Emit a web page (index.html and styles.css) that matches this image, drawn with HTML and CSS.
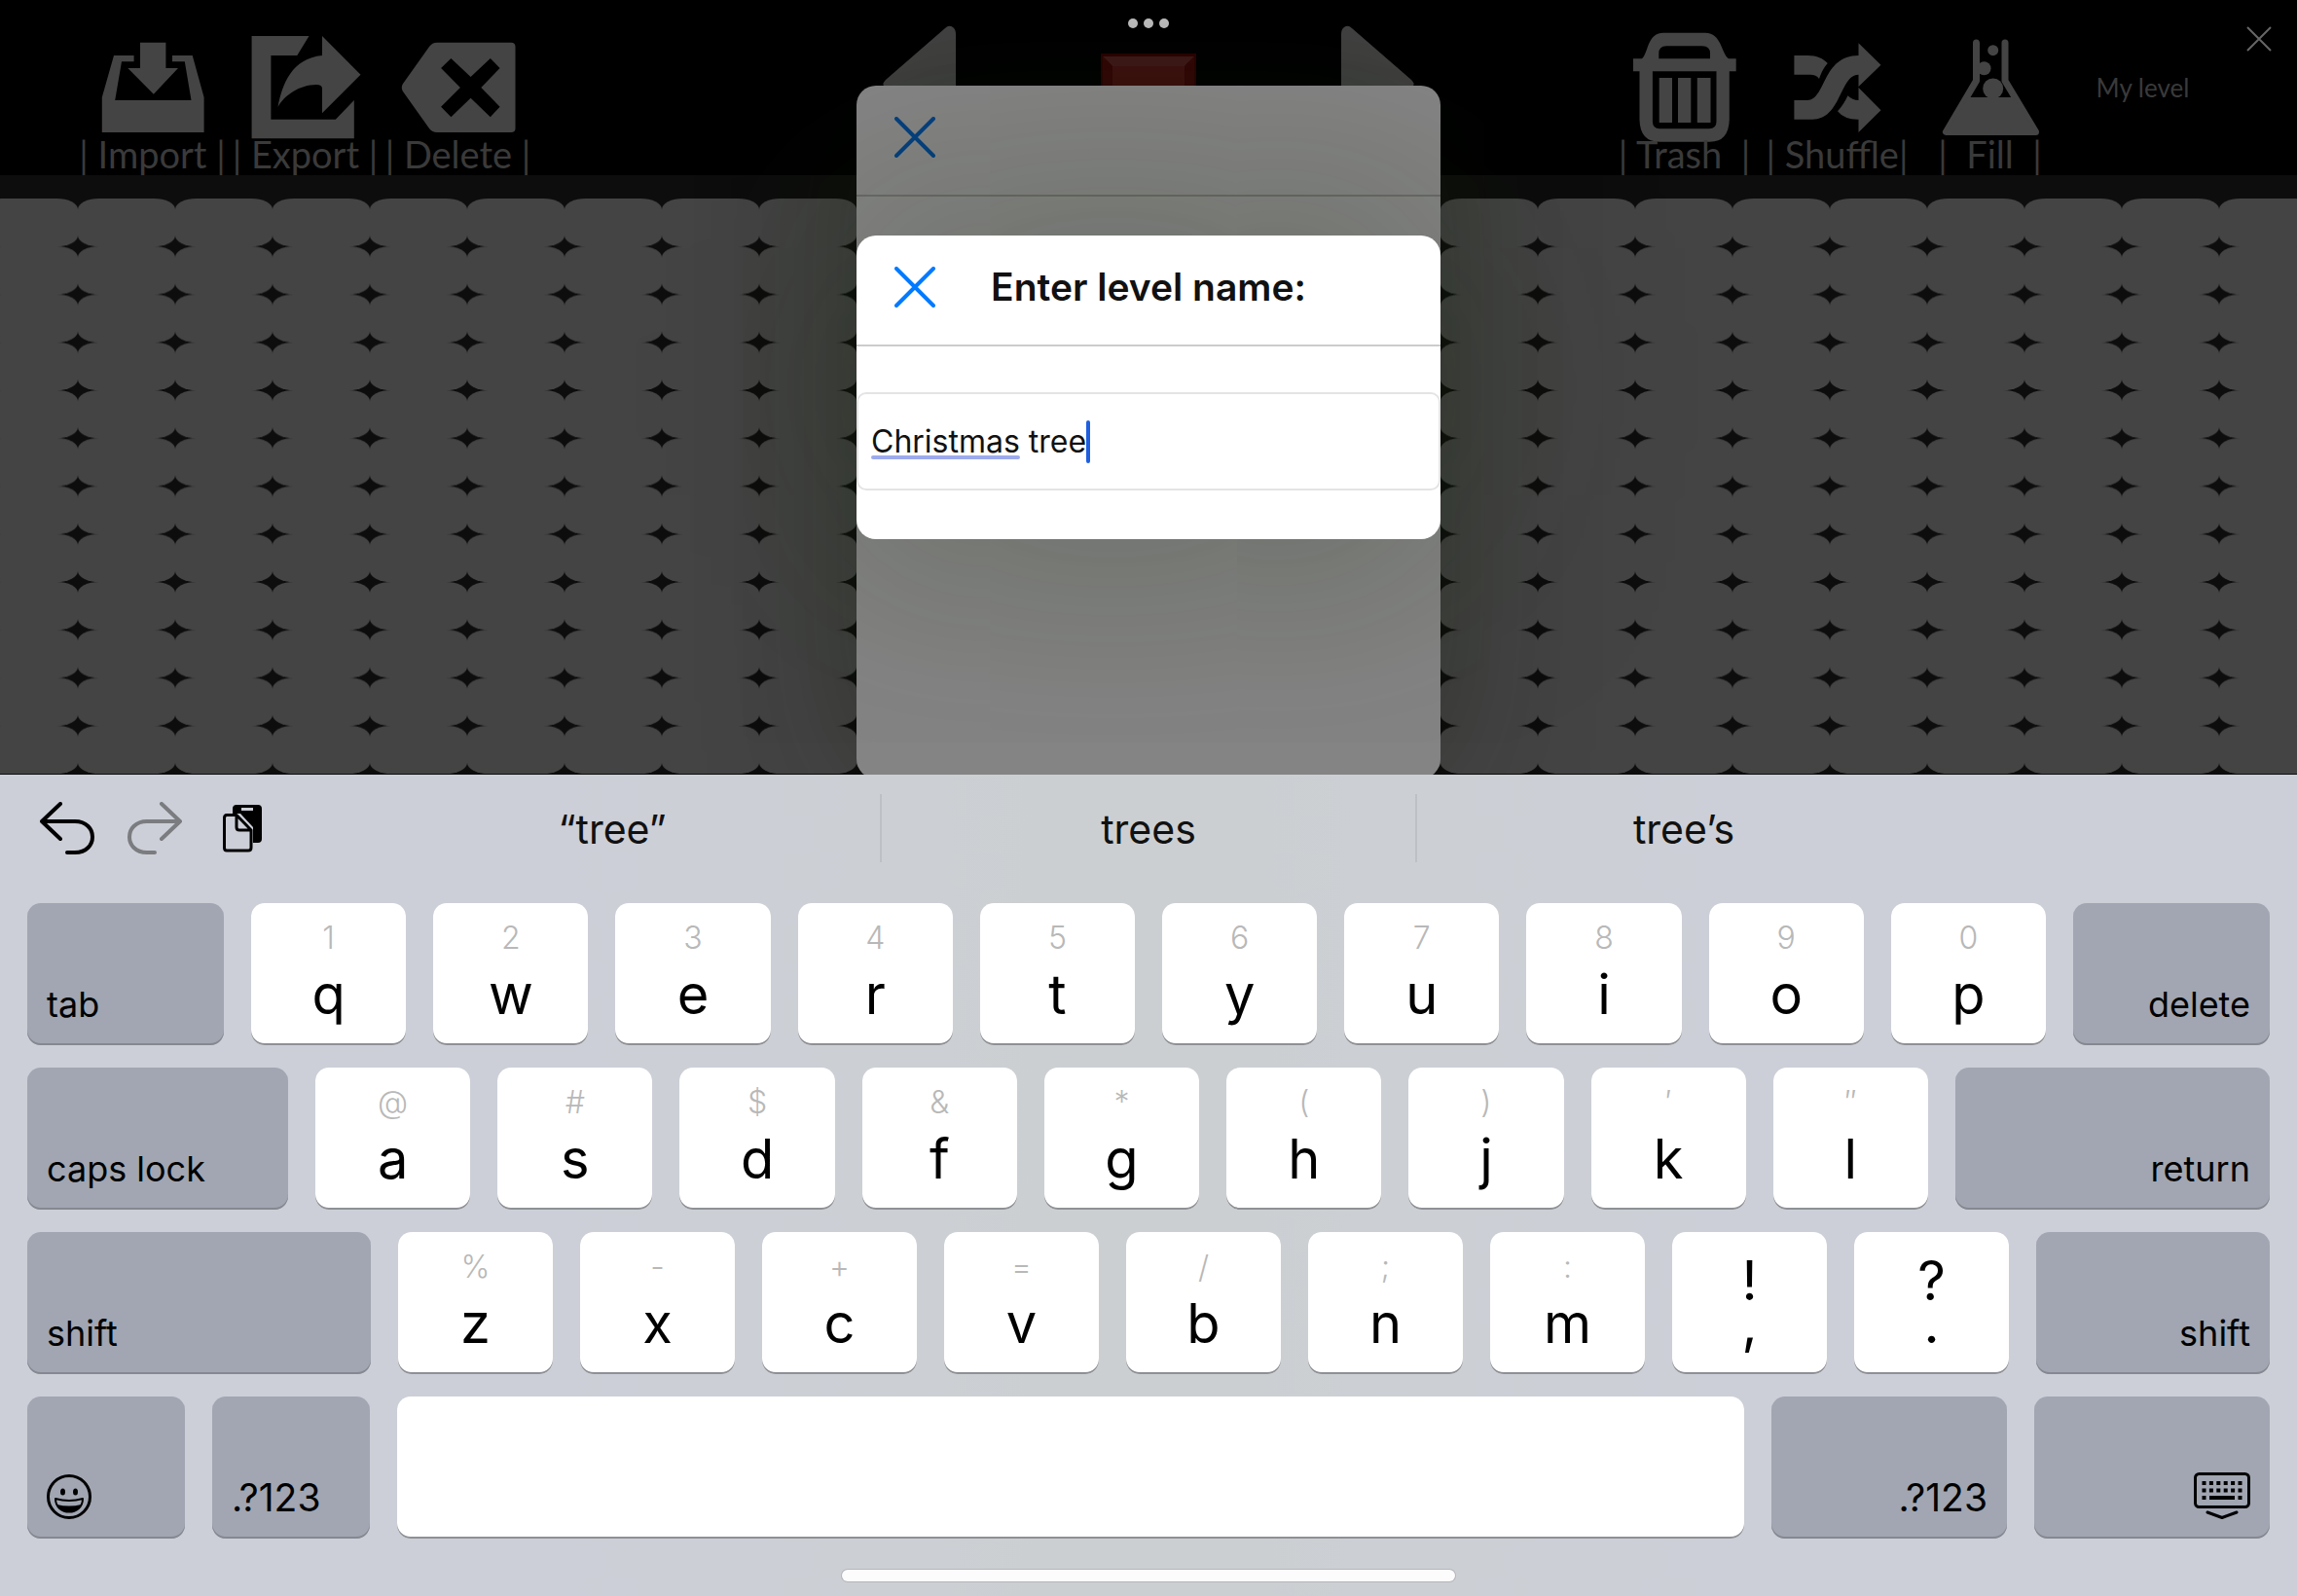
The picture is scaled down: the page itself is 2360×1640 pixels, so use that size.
FILE: index.html
```html
<!DOCTYPE html>
<html lang="en">
<head>
<meta charset="utf-8">
<title>Level editor</title>
<link rel="stylesheet" href="styles.css">
</head>
<body>
<main class="editor">
  <header class="toolbar">
    <div class="tools">
      <button class="tool" type="button">
        <svg class="tool-icon" viewBox="78 0 157 142" aria-hidden="true"><path d="M144 43.700H170.400V70H183L157.800 96.700L131.300 70H144Z"/><path d="M117 57H137.600V63.300H125L118.200 103H196.500L189.800 63.300H177V57H197.700L209.600 100V136H104.800V100Z"/></svg>
        <span class="tool-label">| Import |</span>
      </button>
      <button class="tool" type="button">
        <svg class="tool-icon" viewBox="235 0 157 142" aria-hidden="true"><path d="M258.600 37H317.500L305.300 57H278.400V122.700H344.800L363.800 103V142.300H258.600Z"/><path d="M331 37L370.500 76.700L331 116.300V91Q331 87 325 87C308 87 292 98 285.500 110C290 86 300 60 331 57Z"/></svg>
        <span class="tool-label">| Export |</span>
      </button>
      <button class="tool" type="button">
        <svg class="tool-icon" viewBox="392 0 157 142" aria-hidden="true"><path fill-rule="evenodd" d="M449 43.700H525Q529.500 43.700 529.500 48V132Q529.500 136 525 136H449Q444 136 441 132L414 94Q411.500 90 414 86L441 48Q444 43.700 449 43.700ZM453.100 70L472.900 90L453.100 109.700L463.400 120.300L483.600 100.700L503.800 120.300L513.600 109.700L494.300 90L513.600 70L503.800 60L483.600 79L463.400 60Z"/></svg>
        <span class="tool-label">| Delete |</span>
      </button>
    </div>

    <div class="picker">
      <button class="picker-step" type="button" aria-label="Previous block">
        <svg viewBox="0 0 108 142" aria-hidden="true"><path d="M97 29Q101 25 105 28Q108 30 108 35V142L34 88Q32 86 36 82Z"/></svg>
      </button>
      <svg class="picker-block" viewBox="0 0 98 98" aria-hidden="true"><path fill="#2c0302" d="M0 0H98V98H0Z"/><path fill="#42191a" d="M2 3H96L86 13H12Z"/><path fill="#360606" d="M2 3L12 13V86L2 96ZM96 3L86 13V86L96 96Z"/><path fill="#421010" d="M12 13H86V86H12Z"/></svg>
      <button class="picker-step" type="button" aria-label="Next block">
        <svg viewBox="0 0 108 142" aria-hidden="true"><path d="M11 29Q7 25 3 28Q0 30 0 35V142L74 88Q76 86 72 82Z"/></svg>
      </button>
    </div>

    <div class="tools">
      <button class="tool" type="button">
        <svg class="tool-icon" viewBox="1652 0 157 142" aria-hidden="true"><path fill-rule="evenodd" d="M1678 60.300H1687C1694 54 1692 34 1709 33.700H1752C1769 34 1768 54 1776 60.300H1783.700V73.300H1776.800V123Q1776 145.700 1757 145.700H1705Q1685 145.700 1684.500 123V73.300H1678ZM1704.300 60.300H1757V55Q1757 47.300 1749 47.300H1712Q1704.300 47.300 1704.300 55ZM1697.900 73.300V125Q1698 132.300 1705 132.300H1756Q1763.500 132.300 1763.500 125V73.300Z"/><path d="M1704.700 80H1718V126H1704.700ZM1724 80H1737.300V126H1724ZM1743.800 80H1757.500V126H1743.800Z"/></svg>
        <span class="tool-label">| Trash  |</span>
      </button>
      <button class="tool" type="button">
        <svg class="tool-icon" viewBox="1809 0 157 142" aria-hidden="true"><path d="M1843.400 57H1857C1867 57 1873 60 1877.800 65C1873 70 1871 76 1869 81C1867 78 1864 76.700 1860 76.700H1843.400Z"/><path d="M1843.400 103H1857C1876 103 1872 57 1909.500 57V44.300L1932.500 66.700L1909.500 89V76.700C1890 77 1892 122.700 1862 122.700H1843.400Z"/><path d="M1898.500 98.300Q1903 103 1909.500 103V90L1932.500 113.300L1909.500 136V122.700Q1895 123 1888 114.300Q1894 108 1898.500 98.300Z"/></svg>
        <span class="tool-label">| Shuffle|</span>
      </button>
      <button class="tool" type="button">
        <svg class="tool-icon" viewBox="1966 0 157 142" aria-hidden="true"><path fill="none" stroke="#444" stroke-width="7" stroke-linecap="round" stroke-linejoin="round" d="M2030.500 44V83L1999.500 135.500H2091.500L2060 83V44"/><path d="M2022 100H2069L2091 136H2000Z"/><circle cx="2047.700" cy="51.700" r="5.500"/><circle cx="2038.500" cy="70.300" r="7"/><circle cx="2047.700" cy="91" r="10.500"/></svg>
        <span class="tool-label">|  Fill  |</span>
      </button>
      <span class="level-name">My level</span>
    </div>

    <span class="window-dots" aria-hidden="true"><i></i><i></i><i></i></span>
    <button class="close-editor" type="button" aria-label="Close editor">
      <svg viewBox="0 0 26 26" aria-hidden="true"><path d="M1 1L25 25M25 1L1 25"/></svg>
    </button>
  </header>

  <section class="board" aria-label="Level board">
    <svg class="board-grid" aria-hidden="true">
      <defs>
        <pattern id="cell" x="80" y="0" width="100" height="49.250" patternUnits="userSpaceOnUse">
          <rect width="100" height="49.250" rx="22" ry="11"/>
        </pattern>
      </defs>
      <rect width="100%" height="591" fill="url(#cell)"/>
    </svg>
  </section>

  <section class="sheet sheet-back" aria-hidden="true">
    <div class="sheet-head">
      <button class="sheet-close" type="button" tabindex="-1">
        <svg viewBox="0 0 42 42"><path d="M2 2L40 40M40 2L2 40"/></svg>
      </button>
    </div>
  </section>

  <section class="sheet sheet-front" role="dialog" aria-labelledby="sheet-title">
    <div class="sheet-head">
      <button class="sheet-close" type="button" aria-label="Close">
        <svg viewBox="0 0 42 42" aria-hidden="true"><path d="M2 2L40 40M40 2L2 40"/></svg>
      </button>
      <label class="sheet-title" id="sheet-title" for="level-name">Enter level name:</label>
    </div>
    <div class="field">
      <input class="field-input" id="level-name" type="text" value="Christmas tree" spellcheck="false">
      <span class="field-mark" aria-hidden="true"></span>
      <span class="field-caret" aria-hidden="true"></span>
    </div>
  </section>
</main>

<section class="keyboard" aria-label="Keyboard">
  <div class="suggestions">
    <div class="edit-actions">
      <button type="button" aria-label="Undo"><svg width="56" height="54" viewBox="0 0 56 54" aria-hidden="true"><path d="M21 2L2 20L21 38M2 20H36C60 20 60 52 36 52H28"/></svg></button>
      <button class="is-off" type="button" aria-label="Redo"><svg width="56" height="54" viewBox="0 0 56 54" aria-hidden="true"><path d="M35 2L54 20L35 38M54 20H20C-4 20 -4 52 20 52H28"/></svg></button>
      <button class="paste" type="button" aria-label="Paste"><svg width="40" height="50" viewBox="0 0 40 50" aria-hidden="true"><path class="solid" fill-rule="evenodd" d="M14 1H36Q40 1 40 5V36Q40 40 36 40H31V24L18 10H10V5Q10 1 14 1ZM19 4V7H31V4Z"/><path class="thin" d="M4 11.500H14L29 27V45Q29 48 26 48H4Q1.500 48 1.500 45V14.500Q1.500 11.500 4 11.500ZM14 11.500V24Q14 27 17 27H29"/></svg></button>
    </div>
    <button class="suggestion" type="button">“tree”</button>
    <button class="suggestion" type="button">trees</button>
    <button class="suggestion" type="button">tree’s</button>
  </div>

  <div class="rows">
    <div class="row">
      <button class="key fn tab" type="button">tab</button>
      <button class="key" type="button"><small>1</small><span>q</span></button>
      <button class="key" type="button"><small>2</small><span>w</span></button>
      <button class="key" type="button"><small>3</small><span>e</span></button>
      <button class="key" type="button"><small>4</small><span>r</span></button>
      <button class="key" type="button"><small>5</small><span>t</span></button>
      <button class="key" type="button"><small>6</small><span>y</span></button>
      <button class="key" type="button"><small>7</small><span>u</span></button>
      <button class="key" type="button"><small>8</small><span>i</span></button>
      <button class="key" type="button"><small>9</small><span>o</span></button>
      <button class="key" type="button"><small>0</small><span>p</span></button>
      <button class="key fn end tab" type="button">delete</button>
    </div>
    <div class="row">
      <button class="key fn caps" type="button">caps lock</button>
      <button class="key" type="button"><small>@</small><span>a</span></button>
      <button class="key" type="button"><small>#</small><span>s</span></button>
      <button class="key" type="button"><small>$</small><span>d</span></button>
      <button class="key" type="button"><small>&amp;</small><span>f</span></button>
      <button class="key" type="button"><small>*</small><span>g</span></button>
      <button class="key" type="button"><small>(</small><span>h</span></button>
      <button class="key" type="button"><small>)</small><span>j</span></button>
      <button class="key" type="button"><small>′</small><span>k</span></button>
      <button class="key" type="button"><small>″</small><span>l</span></button>
      <button class="key fn end return" type="button">return</button>
    </div>
    <div class="row">
      <button class="key fn shift-left" type="button">shift</button>
      <button class="key" type="button"><small>%</small><span>z</span></button>
      <button class="key" type="button"><small>-</small><span>x</span></button>
      <button class="key" type="button"><small>+</small><span>c</span></button>
      <button class="key" type="button"><small>=</small><span>v</span></button>
      <button class="key" type="button"><small>/</small><span>b</span></button>
      <button class="key" type="button"><small>;</small><span>n</span></button>
      <button class="key" type="button"><small>:</small><span>m</span></button>
      <button class="key pair" type="button"><span>!</span><span>,</span></button>
      <button class="key pair" type="button"><span>?</span><span>.</span></button>
      <button class="key fn end shift-right" type="button">shift</button>
    </div>
    <div class="row">
      <button class="key fn narrow" type="button" aria-label="Emoji">
        <svg width="46" height="46" viewBox="0 0 46 46" aria-hidden="true"><circle cx="23" cy="23" r="21.500" fill="none" stroke="#000" stroke-width="3"/><ellipse cx="16.500" cy="18" rx="2.500" ry="3.500"/><ellipse cx="29.500" cy="18" rx="2.500" ry="3.500"/><path fill="none" stroke="#000" stroke-width="2" stroke-linejoin="round" d="M9 25Q23 29 37 25C37 43 9 43 9 25Z"/><path d="M10.500 31Q23 34 35.500 31C31 41 15 41 10.500 31Z"/></svg>
      </button>
      <button class="key fn num narrow" type="button">.?123</button>
      <button class="key space" type="button" aria-label="Space"></button>
      <button class="key fn num end wide" type="button">.?123</button>
      <button class="key fn end wide" type="button" aria-label="Hide keyboard">
        <svg width="58" height="48" viewBox="0 0 58 48" aria-hidden="true"><rect x="1.500" y="1.500" width="55" height="34" rx="4" fill="none" stroke="#000" stroke-width="3"/><path fill="none" stroke="#000" stroke-width="4" stroke-dasharray="4 3.400" d="M8.500 11H50M8.500 18.500H50"/><path d="M8.500 24H12.500V28H8.500ZM45.500 24H49.500V28H45.500ZM16 24H42V28H16Z"/><path fill="none" stroke="#000" stroke-width="3" stroke-linecap="round" stroke-linejoin="round" d="M14 41L29 46.500L44 41"/></svg>
      </button>
    </div>
  </div>
  <div class="home-bar"></div>
</section>
</body>
</html>
```
FILE: styles.css
```css
* {
  box-sizing: border-box;
}

body {
  margin: 0;
  min-height: 100vh;
  display: flex;
  flex-direction: column;
  background: #000;
  color: #000;
  font-family: Inter, "Liberation Sans", sans-serif;
}

button {
  margin: 0;
  padding: 0;
  border: 0;
  background: none;
  color: inherit;
  font: inherit;
}

svg {
  display: block;
}

/* Editor behind the sheets */
.editor {
  position: relative;
  flex: 1;
  display: flex;
  flex-direction: column;
  overflow: hidden;
}

.toolbar {
  position: relative;
  z-index: 1;
  height: 180px;
  padding: 0 80px 0 78px;
  display: flex;
  justify-content: space-between;
  align-items: flex-start;
  color: #3a3a3a;
  font-family: Lato, "Open Sans", sans-serif;
}

.tools {
  display: flex;
}

.tool {
  width: 157px;
  display: flex;
  flex-direction: column;
  align-items: center;
}

.tool-icon {
  width: 157px;
  height: 142px;
  overflow: visible;
  fill: #444;
}

.tool-label {
  font-size: 38px;
  line-height: 32px;
  white-space: pre;
}

.level-name {
  width: 157px;
  padding-top: 72px;
  font-size: 26px;
  line-height: 36px;
  text-align: center;
}

.picker {
  position: absolute;
  inset: 0 0 auto;
  display: flex;
  justify-content: center;
  align-items: flex-start;
  gap: 149px;
}

.picker-step svg {
  width: 108px;
  height: 142px;
  fill: #444;
}

.picker-block {
  width: 98px;
  height: 98px;
  margin-top: 55px;
}

.window-dots {
  position: absolute;
  top: 19px;
  left: 50%;
  display: flex;
  gap: 6px;
  margin-left: -21px;
}

.window-dots i {
  width: 10px;
  height: 10px;
  border-radius: 50%;
  background: #c6c6c6;
}

.close-editor {
  position: absolute;
  top: 27px;
  right: 26px;
}

.close-editor svg {
  width: 26px;
  height: 26px;
  stroke: #666;
  stroke-width: 2;
}

.board {
  flex: 1;
  padding-top: 24px;
  background: #0d0d0d;
}

.board-grid {
  width: 100%;
  height: 591px;
  fill: #444;
}

/* Sheets */
.sheet {
  position: absolute;
  z-index: 2;
  left: 50%;
  width: 600px;
  margin-left: -300px;
  border-radius: 20px;
}

.sheet-back {
  top: 88px;
  height: 712px;
  background: #848484;
  box-shadow: 0 0 160px rgba(12, 24, 0, 0.3);
}

.sheet-front {
  top: 242px;
  padding-bottom: 50px;
  background: #fff;
  box-shadow: 0 0 240px rgba(28, 44, 16, 0.4);
}

.sheet-head {
  height: 114px;
  padding: 0 39px;
  display: flex;
  align-items: center;
  border-bottom: 2px solid #ccc;
}

.sheet-back .sheet-head {
  border-color: #6a6b67;
}

.sheet-close {
  padding-bottom: 6px;
}

.sheet-close svg {
  width: 42px;
  height: 42px;
  fill: none;
  stroke: #007aff;
  stroke-width: 4;
  stroke-linecap: round;
}

.sheet-back .sheet-close svg {
  stroke: #05407f;
}

.sheet-title {
  flex: 1;
  padding: 0 42px 6px 0;
  font-size: 39px;
  line-height: 48px;
  font-weight: 600;
  text-align: center;
  color: #111;
}

.field {
  position: relative;
  margin-top: 47px;
}

.field-input {
  display: block;
  width: 100%;
  height: 101px;
  padding: 0 13px;
  border: 2px solid #e4e4e4;
  border-radius: 10px;
  outline: 0;
  background: #fff;
  color: #111;
  font: 32px/42px Inter, "Liberation Sans", sans-serif;
}

.field-mark {
  position: absolute;
  top: 65px;
  left: 15px;
  width: 153px;
  height: 4px;
  border-radius: 2px;
  background: #9dabec;
}

.field-caret {
  position: absolute;
  top: 29px;
  left: 236px;
  width: 4px;
  height: 44px;
  border-radius: 2px;
  background: #1f5fe0;
}

/* Keyboard */
.keyboard {
  position: relative;
  z-index: 3;
  height: 844px;
  padding: 0 28px;
  background: linear-gradient(90deg, #cccfd7 25%, #cccfd2 45%, #cccfd2 55%, #cccfd7 75%);
}

.suggestions {
  height: 132px;
  margin: 0 -28px;
  padding-top: 20px;
  display: grid;
  grid-template-columns: 354px 1fr 1fr 1fr 356px;
  align-items: start;
}

.edit-actions {
  height: 70px;
  padding-left: 41px;
  display: flex;
  align-items: center;
  gap: 34px;
}

.edit-actions svg {
  fill: none;
  stroke: #000;
  stroke-width: 4;
  stroke-linecap: round;
  stroke-linejoin: round;
}

.edit-actions .is-off svg {
  stroke: #7a7c80;
}

.edit-actions .paste {
  margin-left: 8px;
}

.edit-actions .solid {
  fill: #000;
  stroke: none;
}

.edit-actions .thin {
  fill: #cccfd7;
  stroke-width: 3;
}

.suggestion {
  height: 70px;
  padding-top: 2px;
  font-size: 41px;
  line-height: 48px;
  color: #111;
}

.suggestion + .suggestion {
  border-left: 2px solid #bdc0c5;
}

.rows {
  display: grid;
  gap: 23px;
}

.row {
  display: flex;
  gap: 28px;
}

.key {
  flex: 1;
  min-width: 0;
  height: 146px;
  padding-top: 16px;
  display: flex;
  flex-direction: column;
  align-items: center;
  border-radius: 14px;
  background: #fff;
  box-shadow: inset 0 -2px #8e9095;
}

.key small {
  font-size: 32px;
  line-height: 40px;
  font-weight: 300;
  color: #b8b8b8;
}

.key span {
  font-size: 56px;
  line-height: 68px;
  margin-top: 4px;
}

.key.pair span {
  margin-top: 0;
  line-height: 68px;
}

.key.pair span + span {
  line-height: 20px;
}

.key.fn {
  flex: none;
  padding: 0 20px 20px;
  align-items: flex-start;
  justify-content: flex-end;
  background: #a1a6b2;
  box-shadow: inset 0 -2px #85888f;
  font-size: 36px;
  line-height: 44px;
}

.key.num {
  font-size: 39px;
}

.key.end {
  align-items: flex-end;
}

.key.tab {
  width: 202px;
}

.key.caps {
  width: 268px;
}

.key.return {
  width: 323px;
}

.key.shift-left {
  width: 353px;
}

.key.shift-right {
  width: 240px;
}

.key.narrow {
  width: 162px;
}

.key.wide {
  width: 242px;
}

.home-bar {
  width: 630px;
  height: 12px;
  margin: 32px auto 0;
  border-radius: 6px;
  background: #fcfcfc;
  box-shadow: 0 0 0 1px #b4b5ba;
}
```
